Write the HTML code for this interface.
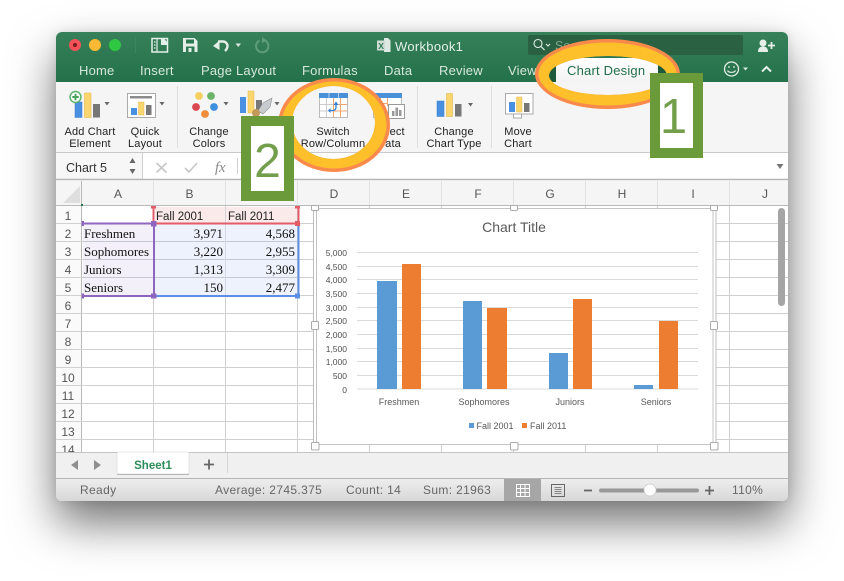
<!DOCTYPE html>
<html><head><meta charset="utf-8"><style>
html,body{margin:0;padding:0;background:#fff;width:844px;height:581px;overflow:hidden}
#w{position:absolute;left:56px;top:32px;width:732px;height:469px;border-radius:6px;overflow:hidden;background:#fff}
#s{position:absolute;left:56px;top:32px;width:732px;height:469px;border-radius:6px;box-shadow:0 22px 45px rgba(0,0,0,.55),0 0 10px rgba(0,0,0,.1)}
svg{display:block}
text{font-family:"Liberation Sans",sans-serif}
.t{font-size:13px;fill:#d6e7dc;letter-spacing:.2px}
.r{font-size:11px;fill:#222;text-anchor:middle;letter-spacing:.15px}
.c{font-size:12px;fill:#555;text-anchor:middle}
.n{font-size:12px;fill:#555;text-anchor:middle}
.d{font-family:"Liberation Serif",serif;font-size:13px;fill:#111}
.e{font-family:"Liberation Serif",serif;font-size:13px;fill:#111;text-anchor:end}
.a{font-size:8.5px;fill:#4f4f4f;text-anchor:end}
.k{font-size:9px;fill:#595959;text-anchor:middle}
.st{font-size:12px;fill:#666;letter-spacing:.35px}
</style></head><body>
<div id="s"></div>
<div id="w">
<svg width="732" height="469" viewBox="56 32 732 469" xmlns="http://www.w3.org/2000/svg">
<defs>
<linearGradient id="g" x1="0" y1="0" x2="0" y2="1"><stop offset="0" stop-color="#37805a"/><stop offset="1" stop-color="#23714a"/></linearGradient>
<linearGradient id="sb" x1="0" y1="0" x2="0" y2="1"><stop offset="0" stop-color="#eeeeee"/><stop offset="1" stop-color="#d8d8d8"/></linearGradient>
<linearGradient id="tb" x1="0" y1="0" x2="0" y2="1"><stop offset="0" stop-color="#ffffff"/><stop offset="1" stop-color="#f3f3f3"/></linearGradient>
</defs>
<!-- title bar -->
<rect x="56" y="32" width="732" height="50" fill="url(#g)"/>
<circle cx="75" cy="45" r="6" fill="#f4525a"/><circle cx="75" cy="45" r="2" fill="#7e1a1c"/>
<circle cx="95" cy="45" r="6" fill="#fdb933"/>
<circle cx="115" cy="45" r="6" fill="#2ec842"/>
<path d="M135.500 37v16" stroke="#3c8560" stroke-width="1"/>
<!-- sidebar icon -->
<rect x="152" y="38.500" width="15.500" height="13.500" fill="none" stroke="#e4efe8" stroke-width="1.500"/>
<path d="M157 38.500v13.500M154 42h1.500M154 45h1.500M154 48h1.500" fill="none" stroke="#e4efe8" stroke-width="1.200"/>
<path d="M161 38.500h3l3.500 4v2.500h-6.500z" fill="#e4efe8"/>
<!-- save -->
<path d="M183 38h11.500l3 3v11h-14.500z" fill="#e4efe8"/>
<rect x="186" y="39.500" width="8" height="4" fill="#2d7a52"/>
<rect x="186" y="46.500" width="8.500" height="5.500" fill="#2d7a52"/><rect x="188.500" y="48" width="3" height="4" fill="#e4efe8"/>
<!-- undo -->
<path d="M218 41.500h5a4.500 4.500 0 0 1 4.500 4.500c0 2-1 3.500-2.500 5" fill="none" stroke="#e4efe8" stroke-width="2.400"/>
<path d="M213 46l6.500-5.500v9.500z" fill="#e4efe8"/>
<path d="M235.500 43.500h5.500l-2.750 3.500z" fill="#dbe8df"/>
<!-- redo -->
<path d="M259.500 40.500a6.200 6.200 0 1 0 5.500 0" fill="none" stroke="#5f9c7b" stroke-width="2"/>
<path d="M262 37l5 3.500-5 2.500z" fill="#5f9c7b"/>
<!-- doc -->
<path d="M377 41h7v-3h4l2.500 2.500v11.500h-6.500v-2h-7z" fill="#dfe9e3"/>
<rect x="377" y="40.500" width="8" height="10" fill="#cfdcd4"/>
<text x="378.300" y="49" style="font-size:8.500px;font-weight:bold;fill:#2d7a52">X</text>
<text x="395" y="51" style="font-size:13px;fill:#e4efe8;letter-spacing:.3px">Workbook1</text>
<!-- search -->
<rect x="528" y="35" width="215" height="20" rx="2" fill="#2a6143"/>
<circle cx="538" cy="43.500" r="4" fill="none" stroke="#e4efe8" stroke-width="1.100"/>
<path d="M541 46.500l3.500 3.500" stroke="#e4efe8" stroke-width="1.200"/>
<path d="M546 44l2 2 2-2" fill="none" stroke="#e4efe8" stroke-width="1"/>
<text x="555" y="50" style="font-size:12.500px;fill:#7ea690">Se</text>
<!-- user plus -->
<circle cx="763" cy="43" r="3.500" fill="#e4efe8"/>
<path d="M758 52c0-4 2-5.500 5-5.500s5 1.500 5 5.500z" fill="#e4efe8"/>
<path d="M768 45.500h7M771.500 42v7" stroke="#e4efe8" stroke-width="1.800"/>
<!-- tab row text -->
<text class="t" x="79" y="75">Home</text>
<text class="t" x="140" y="75">Insert</text>
<text class="t" x="201" y="75">Page Layout</text>
<text class="t" x="302" y="75">Formulas</text>
<text class="t" x="384" y="75">Data</text>
<text class="t" x="439" y="75">Review</text>
<text class="t" x="508" y="75">View</text>
<rect x="549" y="58" width="120" height="24" fill="#1d5a3a"/>
<rect x="556" y="58" width="102" height="24" fill="url(#tb)"/>
<text x="567" y="75" style="font-size:13px;fill:#1f6e4b;letter-spacing:.2px">Chart Design</text>
<!-- smiley -->
<circle cx="731.500" cy="69" r="7" fill="none" stroke="#e4efe8" stroke-width="1.300"/>
<circle cx="729" cy="67" r=".9" fill="#e4efe8"/><circle cx="734" cy="67" r=".9" fill="#e4efe8"/>
<path d="M727.500 70.500c1 2.500 7 2.500 8 0" fill="none" stroke="#e4efe8" stroke-width="1.100"/>
<path d="M743 67.500h5l-2.500 3z" fill="#dbe8df"/>
<path d="M762 71.500l4.500-4.500 4.500 4.500" fill="none" stroke="#e4efe8" stroke-width="2"/>
<!-- ribbon -->
<rect x="56" y="82" width="732" height="70" fill="#f5f5f5"/>
<path d="M177.500 86v62M417.500 86v62M491.500 86v62" stroke="#dedede"/>
<!-- add chart -->
<rect x="75" y="102" width="7" height="15.500" fill="#4a90e2" stroke="#3a78c4" stroke-width=".5"/>
<rect x="84.500" y="93" width="6.500" height="24.500" fill="#fbd66e" stroke="#e3b850" stroke-width=".6"/>
<rect x="93" y="104" width="7" height="13.500" fill="#777"/>
<circle cx="75.500" cy="97" r="6.200" fill="#5cb46a"/><circle cx="75.500" cy="97" r="4.700" fill="#fff"/>
<path d="M75.500 93.800v6.400M72.300 97h6.400" stroke="#4aa35a" stroke-width="1.900"/>
<path d="M104.500 102h5l-2.500 3.500z" fill="#666"/>
<!-- quick layout -->
<rect x="127.500" y="93.500" width="28" height="24" fill="#fff" stroke="#aaa"/>
<rect x="130" y="96" width="22" height="2.500" fill="#8c8c8c"/>
<rect x="131" y="108" width="6" height="7" fill="#4a90e2"/>
<rect x="138.500" y="102" width="5.500" height="13" fill="#fbd66e" stroke="#e3b850" stroke-width=".5"/>
<rect x="146" y="105" width="5.500" height="10" fill="#777"/>
<path d="M159.500 102h5l-2.500 3.500z" fill="#666"/>
<text class="r" x="90" y="135">Add Chart</text><text class="r" x="90" y="147">Element</text>
<text class="r" x="145" y="135">Quick</text><text class="r" x="145" y="147">Layout</text>
<!-- colors -->
<circle cx="199" cy="96" r="3.900" fill="#f4cf5c"/>
<circle cx="211" cy="96" r="3.900" fill="#6cb467"/>
<circle cx="196" cy="107" r="3.900" fill="#d9494f"/>
<circle cx="214" cy="107" r="3.900" fill="#3f8fdf"/>
<circle cx="205" cy="114" r="3.900" fill="#ef8d3c"/>
<path d="M223.500 102h5l-2.500 3.500z" fill="#666"/>
<text class="r" x="209" y="135">Change</text><text class="r" x="209" y="147">Colors</text>
<!-- styles -->
<rect x="240" y="97" width="6" height="16" fill="#4a90e2"/>
<rect x="248" y="91" width="6" height="22" fill="#fbd66e" stroke="#e3b850" stroke-width=".5"/>
<rect x="256" y="100" width="6" height="13" fill="#777"/>
<path d="M258 111l5-8 9-5-2 9-7 7z" fill="#c9ccce" stroke="#8e9294" stroke-width=".6"/>
<circle cx="256" cy="113" r="4" fill="#c29a5b"/>
<path d="M274.500 102h5l-2.500 3.500z" fill="#666"/>
<!-- select data -->
<rect x="373.500" y="93.500" width="28" height="24" fill="#fff" stroke="#bbb"/>
<rect x="373" y="93" width="29" height="5" fill="#4a90d9"/>
<path d="M373 103.500h14M373 110.500h14M387.500 98v8M380.500 98v20" stroke="#f0a672"/>
<rect x="388.500" y="104.500" width="16" height="14" fill="#fff" stroke="#999"/>
<path d="M392 111h2.500v5H392zM395.500 107.500H398V116h-2.500zM399 110h2.500v6H399z" fill="#999"/>
<text class="r" x="389" y="135">Select</text><text class="r" x="389" y="147">Data</text>
<!-- switch -->
<rect x="319.500" y="93.500" width="28" height="24" fill="#fff" stroke="#bbb"/>
<rect x="319" y="93" width="29" height="5" fill="#4a90d9"/>
<path d="M329 93v5M338.500 93v5" stroke="#cfe3f7" stroke-width=".8"/>
<path d="M320 104.500h13M320 111h13M326.500 98v19" stroke="#ccc"/>
<path d="M333 104.500h14M333 111h14M333.500 98v19M340.500 98v19" stroke="#f0a672"/>
<path d="M330 110.500h3a3 3 0 0 0 3-3v-3" fill="none" stroke="#2f7fd4" stroke-width="1.300"/>
<path d="M333.500 105l2.500-3.500 2.500 3.500z" fill="#2f7fd4"/>
<path d="M330.500 108v5l-2.500-2.500z" fill="#2f7fd4"/>
<text class="r" x="333" y="135">Switch</text><text class="r" x="333" y="147">Row/Column</text>
<!-- change type -->
<rect x="437" y="101" width="7" height="15.500" fill="#4a90e2" stroke="#3a78c4" stroke-width=".5"/>
<rect x="446.500" y="93.500" width="6" height="23" fill="#fbd66e" stroke="#e3b850" stroke-width=".6"/>
<rect x="455" y="104" width="6.500" height="12.500" fill="#777"/>
<path d="M468 103h5l-2.500 3.500z" fill="#666"/>
<text class="r" x="454" y="135">Change</text><text class="r" x="454" y="147">Chart Type</text>
<!-- move -->
<rect x="505.500" y="93.500" width="27.500" height="20.500" fill="#fff" stroke="#aaa"/>
<rect x="513.500" y="114" width="8" height="4" fill="#fff" stroke="#aaa"/>
<rect x="509" y="102" width="6" height="10" fill="#4a90e2"/>
<rect x="516.500" y="97" width="5.500" height="15" fill="#fbd66e" stroke="#e3b850" stroke-width=".5"/>
<rect x="524" y="103" width="5.500" height="9" fill="#777"/>
<text class="r" x="518" y="135">Move</text><text class="r" x="518" y="147">Chart</text>
<!-- formula bar -->
<rect x="56" y="152" width="732" height="28" fill="#fff"/>
<path d="M56 152.500h732" stroke="#c9c9c9"/>
<rect x="56" y="153" width="86" height="26" fill="#f7f7f7"/>
<path d="M142.500 153v26M237.500 158v16" stroke="#d0d0d0"/>
<text x="66" y="172" style="font-size:12.500px;fill:#333">Chart 5</text>
<path d="M129.500 163l3-5 3 5zM129.500 169l3 5 3-5z" fill="#666"/>
<path d="M156.500 163l10 9.500M166.500 163l-10 9.500" stroke="#c6c6c6" stroke-width="1.600"/>
<path d="M185 168l4 4 8-9" fill="none" stroke="#c6c6c6" stroke-width="1.600"/>
<text x="215" y="172" style="font-family:'Liberation Serif',serif;font-style:italic;font-size:14.500px;fill:#888">fx</text>
<path d="M776.500 164h7l-3.500 5z" fill="#777"/>
<path d="M56 179.500h732" stroke="#b4b4b4" stroke-width="1.500"/>
<!-- sheet -->
<rect x="56" y="181" width="732" height="25" fill="#f5f5f5"/>
<path d="M80 186v17H63z" fill="#dedede"/>
<path d="M153.500 181v25M225.500 181v25M297.500 181v25M369.500 181v25M441.500 181v25M513.500 181v25M585.500 181v25M657.500 181v25M729.500 181v25" stroke="#e2e2e2"/>
<path d="M56 205.500h732" stroke="#b9b9b9"/>
<path d="M81.500 181v271" stroke="#b9b9b9"/>
<rect x="56" y="206" width="25" height="246" fill="#fafafa"/>
<rect x="82" y="206" width="706" height="246" fill="#fff"/>
<path d="M153.500 206v246M225.500 206v246M297.500 206v246M369.500 206v246M441.500 206v246M513.500 206v246M585.500 206v246M657.500 206v246M729.500 206v246" stroke="#d0d0d0"/>
<path d="M56 223.500h732M56 241.500h732M56 259.500h732M56 277.500h732M56 295.500h732M56 313.500h732M56 331.500h732M56 349.500h732M56 367.500h732M56 385.500h732M56 403.500h732M56 421.500h732M56 439.500h732" stroke="#d0d0d0"/>
<rect x="81" y="204" width="2" height="2" fill="#1f7145"/>
<g>
<text class="c" x="118" y="198">A</text><text class="c" x="189.500" y="198">B</text><text class="c" x="261" y="198">C</text><text class="c" x="334" y="198">D</text><text class="c" x="406" y="198">E</text><text class="c" x="478" y="198">F</text><text class="c" x="550" y="198">G</text><text class="c" x="622" y="198">H</text><text class="c" x="693" y="198">I</text><text class="c" x="765" y="198">J</text>
</g>
<g>
<text class="n" x="68" y="220">1</text><text class="n" x="68" y="238">2</text><text class="n" x="68" y="256">3</text><text class="n" x="68" y="274">4</text><text class="n" x="68" y="292">5</text><text class="n" x="68" y="310">6</text><text class="n" x="68" y="328">7</text><text class="n" x="68" y="346">8</text><text class="n" x="68" y="364">9</text><text class="n" x="68" y="382">10</text><text class="n" x="68" y="400">11</text><text class="n" x="68" y="418">12</text><text class="n" x="68" y="436">13</text><text class="n" x="68" y="454">14</text>
</g>
<!-- ranges -->
<rect x="83" y="224" width="70" height="71" fill="#f3f0f9"/>
<rect x="155" y="224" width="142" height="71" fill="#eef2fc"/>
<rect x="155" y="207" width="142" height="16" fill="#fbeaea"/>
<path d="M83 241.500h70M83 259.500h70M83 277.500h70M155 241.500h142M155 259.500h142M155 277.500h142" stroke="#c5c7d1"/>
<path d="M225.500 207v88" stroke="#d6d6de"/>
<text x="156" y="220" style="font-size:11.500px;fill:#222">Fall 2001</text>
<text x="228" y="220" style="font-size:11.500px;fill:#222">Fall 2011</text>
<text class="d" x="84" y="238">Freshmen</text><text class="d" x="84" y="256">Sophomores</text><text class="d" x="84" y="274">Juniors</text><text class="d" x="84" y="292">Seniors</text>
<text class="e" x="223" y="238">3,971</text><text class="e" x="223" y="256">3,220</text><text class="e" x="223" y="274">1,313</text><text class="e" x="223" y="292">150</text>
<text class="e" x="295" y="238">4,568</text><text class="e" x="295" y="256">2,955</text><text class="e" x="295" y="274">3,309</text><text class="e" x="295" y="292">2,477</text>
<!-- range borders -->
<path d="M155 223.500h143M298.500 206v17M153.500 206v17" stroke="#e35d68" stroke-width="2"/>
<rect x="151" y="206" width="5" height="2.500" fill="#e35d68"/><rect x="295" y="206" width="5" height="2.500" fill="#e35d68"/>
<rect x="295" y="221" width="5" height="5" fill="#e35d68"/>
<path d="M298.500 226v70M156 296h142" stroke="#5c8ee6" stroke-width="2"/>
<rect x="295" y="293.500" width="5" height="5" fill="#5c8ee6"/>
<path d="M84 223.500h69M154 224v72M84 296h69" stroke="#8e66c0" stroke-width="2"/>
<rect x="81.500" y="221" width="2.500" height="5" fill="#8e66c0"/><rect x="81.500" y="293.500" width="2.500" height="5" fill="#8e66c0"/>
<rect x="151" y="221" width="5.500" height="5.500" fill="#8e66c0"/><rect x="151" y="293.500" width="5.500" height="5" fill="#8e66c0"/>
<!-- chart -->
<rect x="313.500" y="208.500" width="402.500" height="236" fill="#fff" stroke="#bdbdbd"/>
<rect x="316.500" y="208.500" width="396.500" height="236" fill="#fff" stroke="#c4c4c4"/>
<text x="514" y="232" style="font-size:14px;fill:#595959;text-anchor:middle">Chart Title</text>
<path d="M357 252.500h341M357 266.500h341M357 279.500h341M357 293.500h341M357 307.500h341M357 320.500h341M357 334.500h341M357 348.500h341M357 361.500h341M357 375.500h341M357 389h341" stroke="#d9d9d9"/>
<g>
<text class="a" x="347" y="256">5,000</text><text class="a" x="347" y="270">4,500</text><text class="a" x="347" y="283">4,000</text><text class="a" x="347" y="297">3,500</text><text class="a" x="347" y="311">3,000</text><text class="a" x="347" y="324">2,500</text><text class="a" x="347" y="338">2,000</text><text class="a" x="347" y="352">1,500</text><text class="a" x="347" y="365">1,000</text><text class="a" x="347" y="379">500</text><text class="a" x="347" y="393">0</text>
</g>
<g fill="#5b9bd5">
<rect x="377" y="281" width="20" height="108"/><rect x="463" y="301" width="19" height="88"/><rect x="549" y="353" width="19" height="36"/><rect x="634" y="385" width="19" height="4"/>
</g>
<g fill="#ed7d31">
<rect x="402" y="264" width="19" height="125"/><rect x="487" y="308" width="20" height="81"/><rect x="573" y="299" width="19" height="90"/><rect x="659" y="321" width="19" height="68"/>
</g>
<text class="k" x="399" y="405">Freshmen</text><text class="k" x="484" y="405">Sophomores</text><text class="k" x="570" y="405">Juniors</text><text class="k" x="656" y="405">Seniors</text>
<rect x="469" y="423" width="5" height="5" fill="#5b9bd5"/><text x="476.500" y="429" style="font-size:9px;fill:#595959">Fall 2001</text>
<rect x="522" y="423" width="5" height="5" fill="#ed7d31"/><text x="530" y="429" style="font-size:9px;fill:#595959">Fall 2011</text>
<!-- handles -->
<g fill="#fff" stroke="#ababab">
<rect x="311.500" y="205.500" width="7" height="5" rx="1"/><rect x="510.500" y="205.500" width="7" height="5" rx="1"/><rect x="710.500" y="205.500" width="7" height="5" rx="1"/>
<rect x="311.500" y="321.500" width="7" height="8" rx="1"/><rect x="710.500" y="321.500" width="7" height="8" rx="1"/>
<rect x="311.500" y="442.500" width="7.500" height="7.500" rx="1"/><rect x="510.500" y="442.500" width="7.500" height="7.500" rx="1"/><rect x="710.500" y="442.500" width="7.500" height="7.500" rx="1"/>
</g>
<rect x="778" y="208" width="7" height="98" rx="3.500" fill="#a5a5a5"/>
<!-- sheet tabs -->
<rect x="56" y="452" width="732" height="26" fill="#f0f0f0"/>
<path d="M56 452.500h732" stroke="#c4c4c4"/>
<path d="M78 460v10l-7-5zM94 460v10l7-5z" fill="#8e8e8e"/>
<rect x="117" y="452" width="72" height="22" rx="1.500" fill="#fff" stroke="#d0d0d0" stroke-width=".5"/>
<path d="M117 474.500h72" stroke="#b5b5b5"/>
<text x="153" y="469" style="font-size:11.500px;font-weight:bold;fill:#2f8c5a;text-anchor:middle">Sheet1</text>
<path d="M204 464.500h10M209 459.500v10" stroke="#666" stroke-width="1.800"/>
<path d="M227.500 453v20" stroke="#d4d4d4"/>
<!-- status -->
<rect x="56" y="478" width="732" height="23" fill="url(#sb)"/>
<path d="M56 478.500h732" stroke="#b5b5b5"/>
<text class="st" x="80" y="494">Ready</text>
<text class="st" x="215" y="494">Average: 2745.375</text>
<text class="st" x="346" y="494">Count: 14</text>
<text class="st" x="423" y="494">Sum: 21963</text>
<rect x="504" y="479" width="37" height="22" fill="#a6a6a6"/>
<path d="M516.500 484.500h13v12h-13zM516.500 488.500h13M516.500 492.500h13M520.500 484.500v12M525 484.500v12" fill="none" stroke="#fff"/>
<rect x="551.500" y="484.500" width="13" height="12" fill="none" stroke="#666"/>
<path d="M554.500 487.500h7M554.500 489.500h7M554.500 491.500h7M554.500 493.500h7" stroke="#666" stroke-width=".8"/>
<path d="M584 490.500h8M705 490.500h9M709.500 486v9" stroke="#666" stroke-width="1.800"/>
<rect x="599" y="488.500" width="100" height="4" rx="2" fill="#999"/>
<circle cx="650" cy="490" r="6" fill="#fff" stroke="#c8c8c8" stroke-width=".7"/>
<text class="st" x="732" y="494">110%</text>
<!-- annotations -->
<path fill-rule="evenodd" fill="#fa8a4b" d="M535 74a72.500 35 0 1 0 145 0a72.500 35 0 1 0 -145 0ZM549 75.500a59 19.500 0 1 0 118 0a59 19.500 0 1 0 -118 0Z"/>
<path fill-rule="evenodd" fill="#fdc02b" d="M538.500 74a69 31.500 0 1 0 138 0a69 31.500 0 1 0 -138 0ZM549 75.500a59 19.500 0 1 0 118 0a59 19.500 0 1 0 -118 0Z"/>
<path fill-rule="evenodd" fill="#fa8a4b" d="M278 125a56 47 0 1 0 112 0a56 47 0 1 0 -112 0ZM292 122.500a41.500 36.500 0 1 0 83 0a41.500 36.500 0 1 0 -83 0Z"/>
<path fill-rule="evenodd" fill="#fdc02b" d="M281.500 125a52.500 43.500 0 1 0 105 0a52.500 43.500 0 1 0 -105 0ZM292 122.500a41.500 36.500 0 1 0 83 0a41.500 36.500 0 1 0 -83 0Z"/>
<rect x="655" y="78" width="43" height="75" fill="#fff" stroke="#6a9a3a" stroke-width="10"/>
<text x="673.500" y="133" style="font-size:49px;fill:#739f4c;text-anchor:middle">1</text>
<rect x="246" y="121" width="43" height="75" fill="#fff" stroke="#6a9a3a" stroke-width="10"/>
<text x="267.500" y="177" style="font-size:48px;fill:#739f4c;text-anchor:middle">2</text>
</svg>
</div>
</body></html>
